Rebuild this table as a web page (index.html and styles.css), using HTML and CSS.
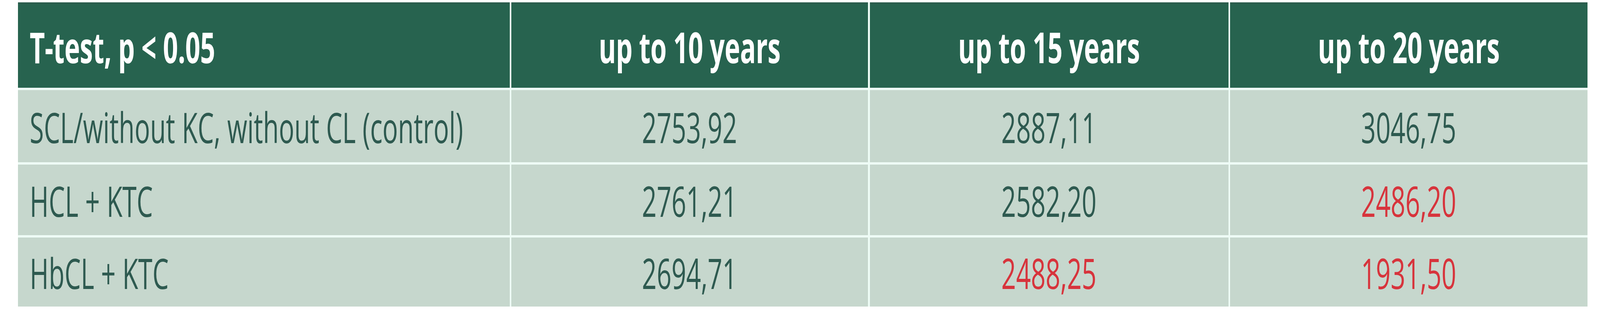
FILE: index.html
```html
<!DOCTYPE html>
<html lang="en">
<head>
<meta charset="utf-8">
<title>T-test table</title>
<link rel="stylesheet" href="styles.css">
</head>
<body>
<div class="table">
  <div class="cell head first"><span class="txt">T-test, p &lt; 0.05</span></div>
  <div class="cell head"><span class="txt">up to 10 years</span></div>
  <div class="cell head"><span class="txt">up to 15 years</span></div>
  <div class="cell head"><span class="txt">up to 20 years</span></div>

  <div class="cell first"><span class="txt">SCL/without KC, without CL (control)</span></div>
  <div class="cell"><span class="txt">2753,92</span></div>
  <div class="cell"><span class="txt">2887,11</span></div>
  <div class="cell"><span class="txt">3046,75</span></div>

  <div class="cell first"><span class="txt">HCL + KTC</span></div>
  <div class="cell"><span class="txt">2761,21</span></div>
  <div class="cell"><span class="txt">2582,20</span></div>
  <div class="cell sig"><span class="txt">2486,20</span></div>

  <div class="cell first"><span class="txt">HbCL + KTC</span></div>
  <div class="cell"><span class="txt">2694,71</span></div>
  <div class="cell sig"><span class="txt">2488,25</span></div>
  <div class="cell sig"><span class="txt">1931,50</span></div>
</div>
</body>
</html>
```
FILE: styles.css
```css
:root {
  --sx: 1;
}
@media (max-width: 4096px) {
  :root { --sx: 0.61171; }
}
html, body {
  margin: 0;
  padding: 0;
  background: #ffffff;
}
body {
  height: 800px;
  font-family: "Open Sans", "Noto Sans", sans-serif;
  overflow: hidden;
}
.table {
  margin: 6px 0 0 1.1201vw;
  width: 98.1033vw;
  display: grid;
  grid-template-columns: 2058fr 1493fr 1501fr 1496fr;
  grid-template-rows: 219px 185px 181px 177px;
  column-gap: 0.1045vw;
  row-gap: 6px;
  background: #eefcf6;
}
.cell {
  background: #c6d7cd;
  color: #2e5a50;
  font-size: 108px;
  letter-spacing: 0;
  display: flex;
  align-items: center;
  justify-content: center;
  padding-top: 3px;
  box-sizing: border-box;
  white-space: nowrap;
  min-width: 0;
}
.cell.first {
  justify-content: flex-start;
  padding-left: 0.7318vw;
}
.cell.head {
  background: #27634f;
  color: #ffffff;
  font-size: 110px;
  font-weight: 700;
  letter-spacing: -0.5px;
  padding-top: 7px;
  box-shadow: inset 0 5px 0 #2b5d4d;
}
.cell.sig {
  color: #d7343c;
}
.txt {
  display: inline-block;
  transform: scaleX(var(--sx));
  transform-origin: center center;
}
.first .txt {
  transform-origin: left center;
}
```
